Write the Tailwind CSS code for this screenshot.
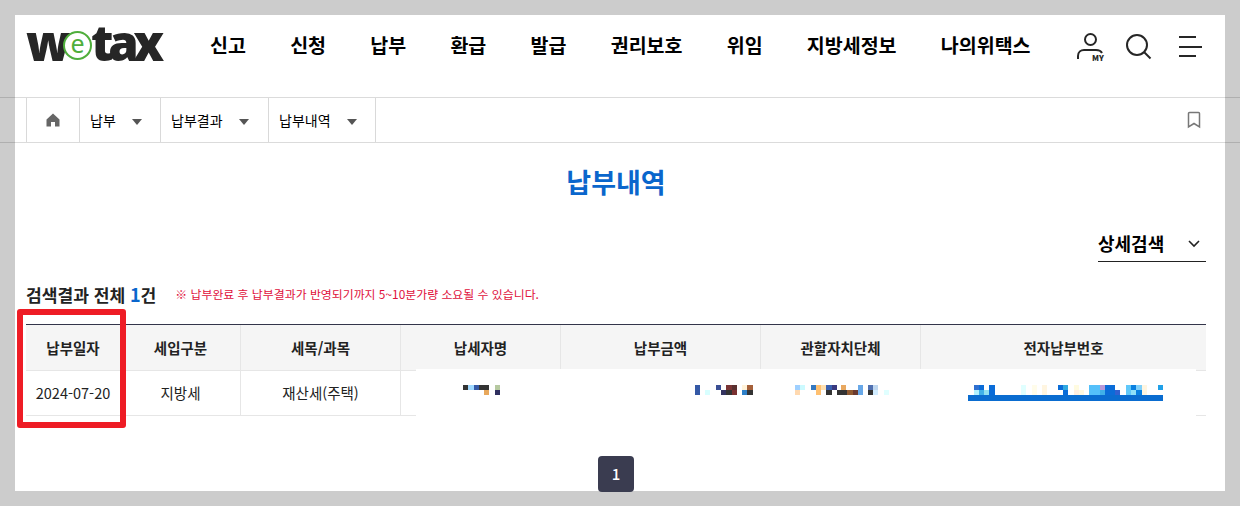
<!DOCTYPE html>
<html lang="ko">
  <head>
    <meta charset="UTF-8" />
    <title>납부내역</title>
    <script src="https://cdn.jsdelivr.net/npm/@tailwindcss/browser@4"></script>
  </head>
  <body class="bg-[#cccccc] h-[506px] overflow-hidden font-['Noto_Sans_CJK_KR','Noto_Sans',sans-serif] text-[#222]">
    <div class="relative mx-[15px] mt-[15px] h-[476px] bg-white">
      <!-- header -->
      <header class="flex items-start h-[82px] pl-[11px]">
        <div class="flex items-center h-[60px] w-[184px] font-['Open_Sans'] font-extrabold text-[49px] tracking-[-3.500px] text-[#262626] leading-none pb-[6px]">
          <span>w</span>
          <span class="relative flex items-center justify-center w-[29px] h-[29px] mt-[6px] -ml-[4px] -mr-[1px] rounded-full border-2 border-[#4fae3c] bg-white font-['Noto_Sans'] font-normal text-[25px] tracking-normal text-[#4fae3c] pb-[3px]">e</span>
          <span class="tracking-[-5.500px]">tax</span>
        </div>
        <nav class="flex gap-[44.250px] h-[60px] items-center text-[19.500px] font-bold text-black whitespace-nowrap">
          <a>신고</a><a>신청</a><a>납부</a><a>환급</a><a>발급</a><a>권리보호</a><a>위임</a><a>지방세정보</a><a>나의위택스</a>
        </nav>
        <div class="ml-auto relative w-[160px] h-[60px]">
          <svg class="absolute left-0 top-0" width="160" height="60" viewBox="1065 15 160 60" fill="none" stroke="#262626" stroke-width="2">
            <circle cx="1090.5" cy="39.5" r="5.5" />
            <path d="M1078 59v-3c0-4 3-6 6-6h12c3 0 5 1 6 3" />
            <circle cx="1137" cy="45" r="10" />
            <path d="M1144 52l6.500 6.500" />
            <path d="M1179 37h17M1179 47h23M1179 56h17" />
          </svg>
          <span class="absolute left-[27px] top-[37px] text-[8px] font-black leading-[12px] text-[#262626]">MY</span>
        </div>
      </header>

      <!-- breadcrumb -->
      <div class="flex -mx-[15px] pl-[26px] pr-[39px] h-[46px] border-y border-black/[0.14] text-[14px] text-black">
        <div class="flex items-center justify-center w-[54px] border-x border-[#d9d9d9]">
          <svg width="16" height="16" viewBox="0 0 16 16" fill="#666"><path d="M8 1.500L1.500 7.500V14.500H6V10H10V14.500H14.500V7.500Z" /></svg>
        </div>
        <div class="flex items-center w-[81px] pl-[10px] border-r border-[#d9d9d9]">납부<i class="ml-[16px] mt-[3px] border-x-[5px] border-t-[6px] border-x-transparent border-t-[#555]"></i></div>
        <div class="flex items-center w-[108px] pl-[10px] border-r border-[#d9d9d9]">납부결과<i class="ml-[16px] mt-[3px] border-x-[5px] border-t-[6px] border-x-transparent border-t-[#555]"></i></div>
        <div class="flex items-center w-[107px] pl-[10px] border-r border-[#d9d9d9]">납부내역<i class="ml-[16px] mt-[3px] border-x-[5px] border-t-[6px] border-x-transparent border-t-[#555]"></i></div>
        <div class="ml-auto flex items-center">
          <svg width="14" height="18" viewBox="0 0 14 18" fill="none" stroke="#777" stroke-width="1.500"><path d="M2.500 1.500h9a1 1 0 0 1 1 1v13.500l-5.500-3.500-5.500 3.500V2.500a1 1 0 0 1 1-1z" /></svg>
        </div>
      </div>

      <!-- content -->
      <main class="pl-[11px] pr-[19px]">
        <h1 class="h-[80px] pt-[18px] text-center text-[27px] leading-[42px] font-bold text-[#0a66cc]">납부내역</h1>
        <div class="flex justify-end">
          <div class="flex items-center justify-between w-[108px] h-[39px] pt-[3px] border-b border-[#222] text-[18px] font-semibold text-black">
            상세검색
            <svg class="mr-[6px]" width="12" height="8" viewBox="0 0 12 8" fill="none" stroke="#222" stroke-width="1.600"><path d="M1 1l5 5 5-5" /></svg>
          </div>
        </div>
        <div class="flex items-center h-[62px] pt-[2px]">
          <strong class="text-[17.100px] font-bold">검색결과 전체 <b class="text-[#0a66cc] text-[18px] font-bold">1</b>건</strong>
          <span class="ml-[19px] text-[11.900px] text-[#e0103c]">※ 납부완료 후 납부결과가 반영되기까지 5~10분가량 소요될 수 있습니다.</span>
        </div>

        <div class="grid grid-cols-[95px_120px_160px_160px_200px_160px_285px] border-t border-[#33354a] text-center text-[14.500px] whitespace-nowrap">
          <div class="flex items-center justify-center h-[45px] bg-[#f5f5f5] border-r border-[#e6e6e6] font-semibold">납부일자</div>
          <div class="flex items-center justify-center h-[45px] bg-[#f5f5f5] border-r border-[#e6e6e6] font-semibold">세입구분</div>
          <div class="flex items-center justify-center h-[45px] bg-[#f5f5f5] border-r border-[#e6e6e6] font-semibold">세목/과목</div>
          <div class="flex items-center justify-center h-[45px] bg-[#f5f5f5] border-r border-[#e6e6e6] font-semibold">납세자명</div>
          <div class="flex items-center justify-center h-[45px] bg-[#f5f5f5] border-r border-[#e6e6e6] font-semibold">납부금액</div>
          <div class="flex items-center justify-center h-[45px] bg-[#f5f5f5] border-r border-[#e6e6e6] font-semibold">관할자치단체</div>
          <div class="flex items-center justify-center h-[45px] bg-[#f5f5f5] font-semibold">전자납부번호</div>
          <div class="flex items-center justify-center h-[46px] border-y border-r border-[#e6e6e6]">2024-07-20</div>
          <div class="flex items-center justify-center h-[46px] border-y border-r border-[#e6e6e6]">지방세</div>
          <div class="flex items-center justify-center h-[46px] border-y border-r border-[#e6e6e6]">재산세(주택)</div>
          <div class="h-[46px] border-y border-r border-[#e6e6e6]"></div>
          <div class="h-[46px] border-y border-r border-[#e6e6e6]"></div>
          <div class="h-[46px] border-y border-r border-[#e6e6e6]"></div>
          <div class="h-[46px] border-y border-[#e6e6e6]"></div>
        </div>

        <div class="flex justify-center mt-[40px]">
          <span class="flex items-center justify-center w-[36px] h-[36px] rounded-[4px] bg-[#3a3c50] text-white text-[15px] font-medium">1</span>
        </div>
      </main>

      <!-- redacted cells -->
      <svg class="absolute left-[401px] top-[354px]" width="780" height="47" viewBox="416 369 780 47" shape-rendering="crispEdges">
        <rect x="416" y="369" width="780" height="47" fill="#fff" />
        <g>
          <rect x="463" y="385" width="5" height="5" fill="#333" /><rect x="468" y="385" width="6" height="5" fill="#9fd8ff" /><rect x="474" y="385" width="5" height="5" fill="#3559a6" /><rect x="479" y="385" width="10" height="5" fill="#333" /><rect x="495" y="385" width="5" height="5" fill="#b6c9a0" /><rect x="484" y="390" width="5" height="5" fill="#e8a85c" /><rect x="495" y="390" width="5" height="5" fill="#2f2f5f" />
        </g>
        <g>
          <rect x="695" y="385" width="5" height="10" fill="#3559a6" /><rect x="705" y="390" width="5" height="5" fill="#d8ffff" /><rect x="716" y="385" width="5" height="5" fill="#3a4f94" /><rect x="721" y="390" width="5" height="5" fill="#33335f" /><rect x="726" y="385" width="6" height="5" fill="#7a3535" /><rect x="732" y="385" width="5" height="5" fill="#5a3030" /><rect x="726" y="390" width="6" height="5" fill="#333" /><rect x="732" y="390" width="5" height="5" fill="#7a3030" /><rect x="742" y="385" width="5" height="5" fill="#fff2d8" /><rect x="747" y="385" width="6" height="5" fill="#a5603a" /><rect x="742" y="390" width="5" height="5" fill="#2e80c8" /><rect x="747" y="390" width="6" height="5" fill="#333" />
        </g>
        <g>
          <rect x="795" y="385" width="5" height="5" fill="#9fd0ff" /><rect x="800" y="385" width="5" height="5" fill="#ccfaff" /><rect x="795" y="390" width="5" height="5" fill="#ffd9b0" /><rect x="811" y="385" width="5" height="5" fill="#3478c0" /><rect x="816" y="385" width="5" height="10" fill="#ffc070" /><rect x="821" y="385" width="5" height="5" fill="#ffe0b0" /><rect x="826" y="385" width="6" height="5" fill="#3a60b0" /><rect x="832" y="385" width="5" height="5" fill="#3a3a80" /><rect x="841" y="385" width="5" height="5" fill="#e8a860" /><rect x="858" y="385" width="5" height="10" fill="#68a8e8" /><rect x="868" y="385" width="5" height="5" fill="#5070b0" /><rect x="873" y="385" width="5" height="5" fill="#c0d8f0" /><rect x="826" y="390" width="6" height="5" fill="#333" /><rect x="837" y="390" width="10" height="5" fill="#333" /><rect x="847" y="390" width="6" height="5" fill="#905a30" /><rect x="853" y="390" width="5" height="5" fill="#6a3a30" /><rect x="868" y="390" width="5" height="5" fill="#333" /><rect x="873" y="390" width="5" height="5" fill="#d0ecff" /><rect x="884" y="390" width="5" height="5" fill="#e0ffff" />
        </g>
        <g>
          <rect x="974" y="385" width="5" height="5" fill="#3070d0" /><rect x="979" y="385" width="5" height="5" fill="#0a6cd8" /><rect x="989" y="385" width="6" height="10" fill="#0a6cd8" /><rect x="974" y="390" width="5" height="5" fill="#b0f0ff" /><rect x="979" y="390" width="5" height="5" fill="#40b0e8" /><rect x="984" y="390" width="5" height="5" fill="#90e0f0" /><rect x="1021" y="385" width="5" height="10" fill="#e0ffff" /><rect x="1032" y="385" width="5" height="10" fill="#fffcea" /><rect x="1042" y="385" width="5" height="10" fill="#fff5e0" /><rect x="1058" y="385" width="5" height="5" fill="#0a6cd8" /><rect x="1063" y="385" width="5" height="5" fill="#30a8e0" /><rect x="1063" y="390" width="5" height="5" fill="#0a6cd8" /><rect x="1074" y="385" width="5" height="5" fill="#fffbe0" /><rect x="1074" y="390" width="5" height="5" fill="#ffeee0" /><rect x="1079" y="390" width="5" height="5" fill="#fff8e0" /><rect x="1089" y="385" width="11" height="10" fill="#55c0fa" /><rect x="1100" y="385" width="5" height="5" fill="#b898d8" /><rect x="1100" y="390" width="5" height="5" fill="#40b0e8" /><rect x="1105" y="385" width="10" height="10" fill="#0a6cd8" /><rect x="1115" y="390" width="5" height="5" fill="#3060d0" /><rect x="1126" y="385" width="5" height="10" fill="#60c8fa" /><rect x="1131" y="385" width="5" height="5" fill="#0a80e0" /><rect x="1131" y="390" width="5" height="5" fill="#90e0f8" /><rect x="1136" y="385" width="6" height="5" fill="#80d0fa" /><rect x="1136" y="390" width="6" height="5" fill="#0a80e0" /><rect x="1142" y="385" width="5" height="10" fill="#fff5e0" /><rect x="1158" y="385" width="5" height="5" fill="#20a0e8" />
          <rect x="968" y="395" width="195" height="6" fill="#0a6cd0" />
        </g>
      </svg>

      <!-- red highlight -->
      <div class="absolute left-[2px] top-[294px] w-[109px] h-[119px] border-[6px] border-[#ee1c25] rounded-[3px]"></div>
    </div>
  </body>
</html>
